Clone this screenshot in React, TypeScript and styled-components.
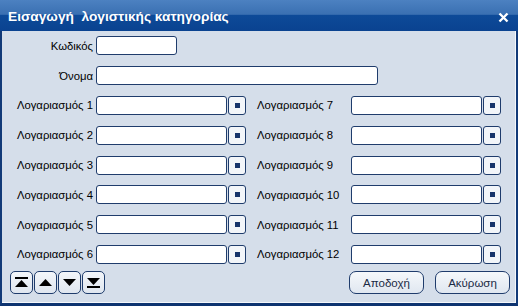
import * as React from 'react';
import styled, { createGlobalStyle } from 'styled-components';

const GlobalStyle = createGlobalStyle`
  html, body {
    margin: 0;
    padding: 0;
    background: #ffffff;
  }
  * {
    box-sizing: border-box;
  }
`

const Window = styled.div`
  width: 518px;
  height: 306px;
  display: flex;
  flex-direction: column;
  background: #d5deea;
  border-left: 2px solid #123a78;
  border-right: 2px solid #123a78;
  border-bottom: 3px solid #0e3470;
  box-shadow: inset -1px 0 0 #f4f7fb, inset 0 -1px 0 #f4f7fb;
  font-family: "Liberation Sans", Arial, sans-serif;
  font-size: 11.3px;
  color: #000;
`

const TitleBar = styled.div`
  height: 31px;
  flex-shrink: 0;
  margin: 0 -2px;
  padding: 0 9px 0 8px;
  display: flex;
  align-items: center;
  justify-content: space-between;
  background: linear-gradient(to bottom, #4c81c1 0%, #3a70b2 46%, #0d4a98 50%, #0a4290 100%);
  color: #fff;
`

const Title = styled.span`
  font-weight: bold;
  font-size: 13.7px;
  padding-top: 2px;
`

const Close = styled.svg`
  width: 11px;
  height: 11px;
  margin-top: 3px;
`

const Body = styled.div`
  flex: 1;
  display: flex;
  flex-direction: column;
`

const TopRow = styled.div`
  display: flex;
  align-items: center;
  height: 29.8px;
  flex-shrink: 0;
`

const Label = styled.span<{ $w: number; $right?: boolean }>`
  width: ${p => p.$w}px;
  text-align: ${p => (p.$right ? 'right' : 'left')};
  padding-right: ${p => (p.$right ? 3 : 0)}px;
  white-space: nowrap;
`

const Field = styled.div<{ $w: number }>`
  width: ${p => p.$w}px;
  height: 19px;
  background: #fff;
  border: 1px solid #1f3c6c;
  border-radius: 3px;
`

const Grid = styled.div`
  display: grid;
  grid-template-columns: 94px 131px 18px 12px 94px 131px 18px;
  grid-auto-rows: 29.8px;
  align-items: center;
`

const Pick = styled.div`
  width: 18px;
  height: 19px;
  margin-left: 1px;
  background: #f2f5f9;
  border: 1px solid #1f3c6c;
  border-radius: 3px;
  display: flex;
  align-items: center;
  justify-content: center;
  &::after {
    content: '';
    width: 5px;
    height: 5px;
    background: #17346a;
  }
`

const Footer = styled.div`
  display: flex;
  align-items: center;
  justify-content: space-between;
  padding: 2px 6px 0 8px;
`

const NavGroup = styled.div`
  display: flex;
  gap: 1px;
`

const NavButton = styled.div`
  width: 23px;
  height: 23px;
  border: 1px solid #1f3c6c;
  border-radius: 5px;
  background: linear-gradient(to bottom, #f3f6fa, #dfe6ef);
  display: flex;
  align-items: center;
  justify-content: center;
`

const Actions = styled.div`
  display: flex;
  gap: 11px;
`

const ActionButton = styled.div`
  width: 75px;
  height: 23px;
  border: 1px solid #1f3c6c;
  border-radius: 7px;
  background: linear-gradient(to bottom, #f5f8fb, #e0e7f0);
  display: flex;
  align-items: center;
  justify-content: center;
  font-size: 11.5px;
  color: #1a2a44;
`

type NavKind = 'first' | 'up' | 'down' | 'last'

function NavIcon({ kind }: { kind: NavKind }) {
  return (
    <svg width="15" height="13" viewBox="0 0 15 13">
      {kind === 'first' && (
        <>
          <rect x="1" y="1" width="13" height="2" fill="#000" />
          <polygon points="7.5,4 14,11 1,11" fill="#000" />
        </>
      )}
      {kind === 'up' && <polygon points="7.5,3 14,10 1,10" fill="#000" />}
      {kind === 'down' && <polygon points="1,3 14,3 7.5,10" fill="#000" />}
      {kind === 'last' && (
        <>
          <polygon points="1,2 14,2 7.5,9" fill="#000" />
          <rect x="1" y="10" width="13" height="2" fill="#000" />
        </>
      )}
    </svg>
  )
}

const rows = [1, 2, 3, 4, 5, 6]

export default function App() {
  return (
    <>
      <GlobalStyle />
      <Window>
        <TitleBar>
          <Title>Εισαγωγή&nbsp; λογιστικής κατηγορίας</Title>
          <Close viewBox="0 0 11 11">
            <path d="M1.5 1.5 L9.5 9.5 M9.5 1.5 L1.5 9.5" stroke="#fff" strokeWidth="2.4" />
          </Close>
        </TitleBar>
        <Body>
          <TopRow>
            <Label $w={94} $right>Κωδικός</Label>
            <Field $w={81} />
          </TopRow>
          <TopRow>
            <Label $w={94} $right>Όνομα</Label>
            <Field $w={282} />
          </TopRow>
          <Grid>
            {rows.map(n => (
              <React.Fragment key={n}>
                <Label $w={94} $right>Λογαριασμός {n}</Label>
                <Field $w={131} />
                <Pick />
                <span />
                <Label $w={94}>Λογαριασμός {n + 6}</Label>
                <Field $w={131} />
                <Pick />
              </React.Fragment>
            ))}
          </Grid>
          <Footer>
            <NavGroup>
              <NavButton><NavIcon kind="first" /></NavButton>
              <NavButton><NavIcon kind="up" /></NavButton>
              <NavButton><NavIcon kind="down" /></NavButton>
              <NavButton><NavIcon kind="last" /></NavButton>
            </NavGroup>
            <Actions>
              <ActionButton>Αποδοχή</ActionButton>
              <ActionButton>Ακύρωση</ActionButton>
            </Actions>
          </Footer>
        </Body>
      </Window>
    </>
  );
}
